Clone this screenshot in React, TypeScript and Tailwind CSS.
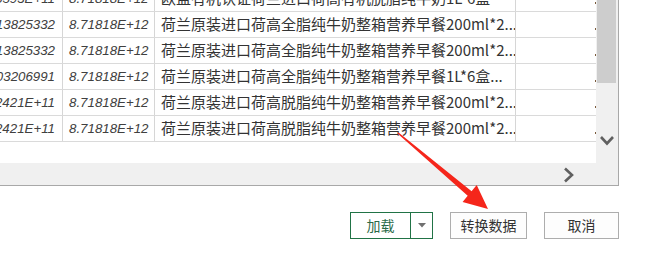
import React from "react";

const rows = [
  { a: "8719595593E+11", b: "8.71818E+12", c: "欧盟有机认证荷兰进口荷高有机脱脂纯牛奶1L*6盒" },
  { a: "8719513825332", b: "8.71818E+12", c: "荷兰原装进口荷高全脂纯牛奶整箱营养早餐200ml*2..." },
  { a: "8719513825332", b: "8.71818E+12", c: "荷兰原装进口荷高全脂纯牛奶整箱营养早餐200ml*2..." },
  { a: "8719203206991", b: "8.71818E+12", c: "荷兰原装进口荷高全脂纯牛奶整箱营养早餐1L*6盒..." },
  { a: "8.72421E+11", b: "8.71818E+12", c: "荷兰原装进口荷高脱脂纯牛奶整箱营养早餐200ml*2..." },
  { a: "8.72421E+11", b: "8.71818E+12", c: "荷兰原装进口荷高脱脂纯牛奶整箱营养早餐200ml*2..." },
];

const num = { fontFamily: '"Liberation Sans", Arial, sans-serif' };
const cjk = { fontFamily: '"Noto Sans CJK SC", "Noto Sans", sans-serif' };

export default function App() {
  return (
    <div className="relative w-[651px] h-[272px] bg-white overflow-hidden">
      <div className="w-[619px] h-[186px] border-r border-b border-[#a8a8a8] flex flex-col">
        <div className="flex h-[163px]">
          <div className="w-[596px] overflow-hidden">
            <div className="mt-[-14px] flex flex-col">
              {rows.map((r, i) => (
                <div key={i} className="flex h-[26px] border-b border-[#dadada]">
                  <div
                    className="w-[63px] shrink-0 border-r border-[#d6d6d6] flex items-center justify-end pr-[7px] overflow-hidden whitespace-nowrap italic text-[13.3px] text-[#404040]"
                    style={num}
                  >
                    <span className="shrink-0">{r.a}</span>
                  </div>
                  <div
                    className="w-[92px] shrink-0 border-r border-[#d6d6d6] flex items-center pl-[6px] overflow-hidden whitespace-nowrap italic text-[13.3px] text-[#404040]"
                    style={num}
                  >
                    {r.b}
                  </div>
                  <div
                    className="w-[361px] shrink-0 border-r border-[#d6d6d6] flex items-center pl-[6px] overflow-hidden whitespace-nowrap text-[15px] text-[#333333]"
                    style={cjk}
                  >
                    {r.c}
                  </div>
                  <div className="w-[80px] shrink-0 flex items-end justify-end pb-[7px]">
                    <span className="w-[1px] h-[2px] bg-[#7a5a3a]" />
                  </div>
                </div>
              ))}
            </div>
          </div>
          <div className="w-[22px] bg-[#f0f0f0] flex flex-col">
            <div className="ml-[1px] w-[19px] h-[83px] bg-[#cdcdcd]" />
            <div className="flex-1" />
            <div className="h-[30px] flex items-start justify-center pt-[2px]">
              <svg width="16" height="12" viewBox="0 0 16 12">
                <path d="M2 2 L8 8.5 L14 2" fill="none" stroke="#606060" strokeWidth="2.6" />
              </svg>
            </div>
          </div>
        </div>
        <div className="h-[22px] bg-[#f0f0f0] flex">
          <div className="w-[562px]" />
          <div className="flex items-center pt-[2px]">
            <svg width="14" height="16" viewBox="0 0 14 16">
              <path d="M3 1.5 L10 8 L3 14.5" fill="none" stroke="#606060" strokeWidth="2.6" />
            </svg>
          </div>
        </div>
      </div>

      <div className="mt-[26px] w-[619px] flex justify-end gap-[17px] text-[14px]" style={cjk}>
        <div className="flex w-[83px] h-[27px] border border-[#217346] bg-white">
          <div className="w-[60px] flex items-center justify-center text-[#2a6a48] border-r border-[#217346]">
            加载
          </div>
          <div className="flex-1 flex items-center justify-center">
            <svg width="8" height="5" viewBox="0 0 8 5">
              <path d="M0 0 L8 0 L4 4.5 Z" fill="#707070" />
            </svg>
          </div>
        </div>
        <div className="w-[77px] h-[27px] border border-[#adadad] bg-[#fdfdfd] flex items-center justify-center text-[#333333]">
          转换数据
        </div>
        <div className="w-[75px] h-[27px] border border-[#adadad] bg-[#fdfdfd] flex items-center justify-center text-[#333333]">
          取消
        </div>
      </div>

      <svg className="absolute inset-0 pointer-events-none" width="651" height="272" viewBox="0 0 651 272">
        <polygon
          points="397.5,133.6 467.7,195.8 462.6,201.9 488,209 476.7,185.1 471.6,191.2 398.5,132.4"
          fill="#f5261b"
        />
      </svg>
    </div>
  );
}
